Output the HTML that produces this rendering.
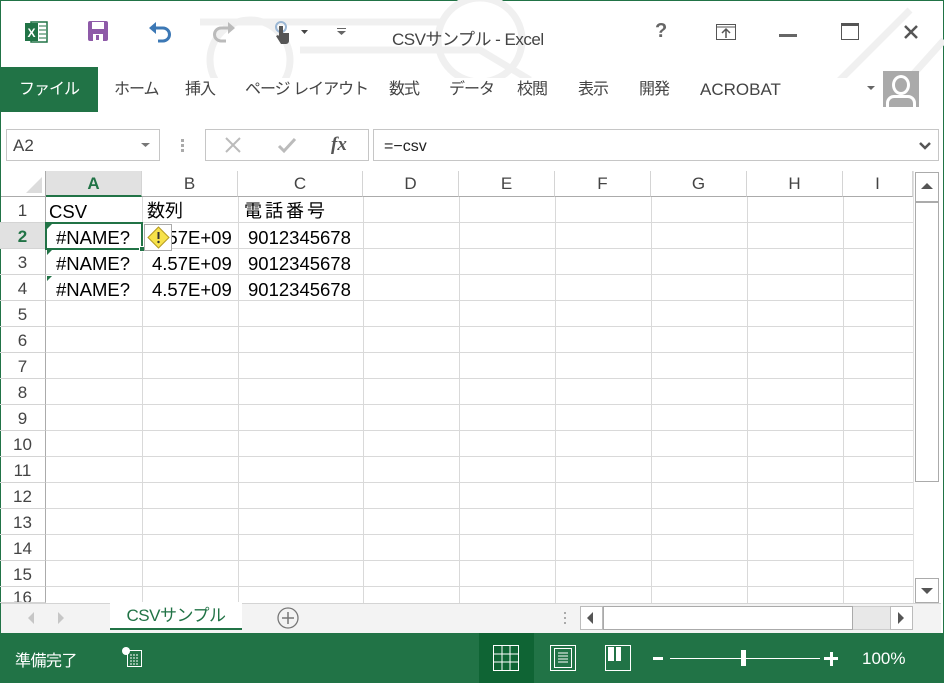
<!DOCTYPE html><html><head><meta charset="utf-8"><style>
*{margin:0;padding:0;box-sizing:border-box}
body{width:944px;height:683px;overflow:hidden;background:#fff;font-family:"Liberation Sans","Noto Sans CJK JP",sans-serif;position:relative;color:#444}
.a{position:absolute}
.tab{position:absolute;top:80px;font-size:16px;color:#444;letter-spacing:-1px;line-height:20px}
.ch{position:absolute;top:171px;height:26px;font-size:17px;color:#444;text-align:center;line-height:26px;border-right:1px solid #d4d4d4;border-bottom:1px solid #ababab;background:#fff}
.rh{position:absolute;left:0;width:46px;height:26px;font-size:17px;text-align:center;line-height:28px;color:#444;border-bottom:1px solid #d4d4d4;border-right:1px solid #ababab}
.cell{position:absolute;font-size:18.5px;color:#000;line-height:26px;height:26px}
</style></head><body>
<div class="a" style="left:0;top:0;width:944px;height:683px;border:1px solid #217346;border-bottom:none"></div>
<svg class="a" style="left:190px;top:0" width="754" height="78"><g stroke="#f0f0f0" stroke-width="7" fill="none"><circle cx="60" cy="60" r="40"/><path d="M10 22 H250 M110 50 H290 L340 80 M640 90 L720 10 M700 100 L754 40"/><circle cx="290" cy="40" r="42"/></g></svg>
<svg class="a" style="left:25px;top:20px" width="24" height="24"><rect x="6" y="2" width="16" height="20" fill="#fff" stroke="#217346" stroke-width="1.5"/><path d="M14 6h7M14 10h7M14 14h7M14 18h7" stroke="#217346"/><rect x="0" y="3" width="13" height="18" fill="#217346"/><text x="2.5" y="17" font-size="12" font-weight="bold" fill="#fff" font-family="Liberation Sans">X</text></svg>
<svg class="a" style="left:88px;top:21px" width="20" height="20"><rect x="0" y="0" width="20" height="20" rx="2" fill="#8e5aa8"/><rect x="4" y="1" width="12" height="7" fill="#fff"/><rect x="5" y="13" width="10" height="7" fill="#fff"/><rect x="8" y="14" width="3" height="5" fill="#8e5aa8"/></svg>
<svg class="a" style="left:148px;top:20px" width="26" height="24"><path d="M6 8 H15 A6 6 0 0 1 15 21 H10" stroke="#3c78b5" stroke-width="3" fill="none"/><path d="M1 8 L8 2 V14Z" fill="#3c78b5"/></svg>
<svg class="a" style="left:210px;top:20px" width="26" height="24"><path d="M20 8 H11 A6 6 0 0 0 11 21 H16" stroke="#bbb" stroke-width="3" fill="none"/><path d="M25 8 L18 2 V14Z" fill="#bbb"/></svg>
<svg class="a" style="left:272px;top:20px" width="40" height="26"><circle cx="9" cy="7" r="5" fill="none" stroke="#9bb7d4" stroke-width="2"/><path d="M7 6 h4 v7 h6 v8 a3 3 0 0 1 -3 3 h-5 l-5 -8 l2 -1 l1 1z" fill="#555"/><path d="M29 10 h7 l-3.5 4z" fill="#444"/></svg>
<div class="a" style="left:337px;top:28px;width:9px;border-top:1px solid #666"></div>
<svg class="a" style="left:337px;top:31px" width="9" height="5"><path d="M0 0h9l-4.5 4z" fill="#666"/></svg>
<div class="a" style="left:392px;top:25px;font-size:17px;color:#444;letter-spacing:-0.5px">CSVサンプル - Excel</div>
<div class="a" style="left:655px;top:20px;font-size:20px;font-weight:bold;color:#666">?</div>
<svg class="a" style="left:716px;top:24px" width="20" height="16"><rect x=".5" y=".5" width="19" height="15" fill="none" stroke="#555"/><path d="M1 3h18" stroke="#555"/><path d="M10 14V6M6 9l4-4 4 4" stroke="#555" stroke-width="1.5" fill="none"/></svg>
<div class="a" style="left:779px;top:34px;width:18px;height:3px;background:#666"></div>
<div class="a" style="left:841px;top:23px;width:18px;height:17px;border:1px solid #555;border-top:3px solid #555"></div>
<svg class="a" style="left:903px;top:24px" width="16" height="16"><path d="M2 2L14 14M14 2L2 14" stroke="#555" stroke-width="2.5"/></svg>
<div class="a" style="left:0;top:67px;width:98px;height:45px;background:#217346;color:#fff;font-size:16px;text-align:center;line-height:45px;letter-spacing:-1px">ファイル</div>
<div class="tab" style="left:114px">ホーム</div>
<div class="tab" style="left:185px">挿入</div>
<div class="tab" style="left:245px">ページ レイアウト</div>
<div class="tab" style="left:389px">数式</div>
<div class="tab" style="left:449px">データ</div>
<div class="tab" style="left:517px">校閲</div>
<div class="tab" style="left:578px">表示</div>
<div class="tab" style="left:639px">開発</div>
<div class="tab" style="left:700px;font-size:17px;letter-spacing:0">ACROBAT</div>
<svg class="a" style="left:867px;top:86px" width="8" height="5"><path d="M0 0h8l-4 4z" fill="#666"/></svg>
<div class="a" style="left:883px;top:71px;width:36px;height:36px;background:#aaa;overflow:hidden"><div class="a" style="left:9px;top:4px;width:18px;height:20px;border-radius:50%;border:3px solid #fff"></div><div class="a" style="left:3px;top:24px;width:30px;height:20px;border-radius:8px 8px 0 0;border:3px solid #fff"></div></div>
<div class="a" style="left:6px;top:129px;width:154px;height:32px;border:1px solid #c6c6c6;font-size:17px;line-height:32px;padding-left:6px;color:#444">A2</div>
<svg class="a" style="left:141px;top:143px" width="9" height="5"><path d="M0 0h9l-4.5 4z" fill="#777"/></svg>
<div class="a" style="left:181px;top:139px;width:3px;height:3px;background:#aaa;box-shadow:0 5px #aaa,0 10px #aaa"></div>
<div class="a" style="left:205px;top:129px;width:164px;height:32px;border:1px solid #c6c6c6"></div>
<svg class="a" style="left:224px;top:136px" width="18" height="18"><path d="M2 2L16 16M16 2L2 16" stroke="#bbb" stroke-width="2"/></svg>
<svg class="a" style="left:277px;top:136px" width="20" height="18"><path d="M2 10l5 5 11-12" stroke="#bbb" stroke-width="3" fill="none"/></svg>
<div class="a" style="left:331px;top:134px;font-family:'Liberation Serif',serif;font-style:italic;font-weight:bold;font-size:19px;color:#555">fx</div>
<div class="a" style="left:373px;top:129px;width:566px;height:32px;border:1px solid #c6c6c6;font-size:16px;line-height:34px;padding-left:10px;color:#222">=−csv</div>
<svg class="a" style="left:918px;top:141px" width="14" height="9"><path d="M2 2l5 5 5-5" stroke="#555" stroke-width="2.5" fill="none"/></svg>
<svg class="a" style="left:0;top:197px" width="913" height="406">
<g stroke="#d9d9d9" stroke-width="1">
<path d="M142.5 0V406M238.5 0V406M363.5 0V406M459.5 0V406M555.5 0V406M651.5 0V406M747.5 0V406M843.5 0V406"/>
<path d="M46 25.5H913M46 51.5H913M46 77.5H913M46 103.5H913M46 129.5H913M46 155.5H913M46 181.5H913M46 207.5H913M46 233.5H913M46 259.5H913M46 285.5H913M46 311.5H913M46 337.5H913M46 363.5H913M46 389.5H913"/>
</g></svg>
<div class="a" style="left:1px;top:171px;width:45px;height:26px;border-right:1px solid #ababab;border-bottom:1px solid #ababab"></div>
<svg class="a" style="left:24px;top:175px" width="20" height="20"><path d="M18 2V18H2Z" fill="#dcdcdc"/></svg>
<div class="ch" style="left:46px;width:96px;background:#e1e1e1;color:#217346;font-weight:bold;border-bottom:2px solid #217346">A</div>
<div class="ch" style="left:142px;width:96px">B</div>
<div class="ch" style="left:238px;width:125px">C</div>
<div class="ch" style="left:363px;width:96px">D</div>
<div class="ch" style="left:459px;width:96px">E</div>
<div class="ch" style="left:555px;width:96px">F</div>
<div class="ch" style="left:651px;width:96px">G</div>
<div class="ch" style="left:747px;width:96px">H</div>
<div class="ch" style="left:843px;width:70px">I</div>
<div class="rh" style="top:197px">1</div>
<div class="rh" style="top:223px;background:#e1e1e1;color:#217346;font-weight:bold">2</div>
<div class="rh" style="top:249px">3</div><div class="rh" style="top:275px">4</div><div class="rh" style="top:301px">5</div><div class="rh" style="top:327px">6</div><div class="rh" style="top:353px">7</div><div class="rh" style="top:379px">8</div><div class="rh" style="top:405px">9</div><div class="rh" style="top:431px">10</div><div class="rh" style="top:457px">11</div><div class="rh" style="top:483px">12</div><div class="rh" style="top:509px">13</div><div class="rh" style="top:535px">14</div><div class="rh" style="top:561px">15</div><div class="rh" style="top:587px;height:16px;line-height:22px;overflow:hidden">16</div>
<div class="cell" style="left:49px;top:199px">CSV</div>
<div class="cell" style="left:147px;top:198px;font-size:18px">数列</div>
<div class="cell" style="left:244px;top:198px;font-size:18px;letter-spacing:3px">電話番号</div>
<div class="cell" style="left:56px;top:225px">#NAME?</div>
<div class="cell" style="left:56px;top:251px">#NAME?</div>
<div class="cell" style="left:56px;top:277px">#NAME?</div>
<div class="cell" style="left:152px;top:225px">4.57E+09</div>
<div class="cell" style="left:152px;top:251px">4.57E+09</div>
<div class="cell" style="left:152px;top:277px">4.57E+09</div>
<div class="cell" style="left:248px;top:225px">9012345678</div>
<div class="cell" style="left:248px;top:251px">9012345678</div>
<div class="cell" style="left:248px;top:277px">9012345678</div>
<svg class="a" style="left:47px;top:224px" width="6" height="60"><path d="M0 0h5L0 5z M0 26h5L0 31z M0 52h5L0 57z" fill="#217346"/></svg>
<div class="a" style="left:45px;top:222px;width:98px;height:28px;border:2px solid #217346"></div>
<div class="a" style="left:139px;top:246px;width:6px;height:6px;background:#217346;border:1px solid #fff"></div>
<div class="a" style="left:144px;top:224px;width:28px;height:27px;background:#fff;border:1px solid #aaa"></div>
<svg class="a" style="left:147px;top:226px" width="23" height="23"><path d="M11.5 1L22 11.5 11.5 22 1 11.5Z" fill="#f7e24a" stroke="#b59a1f"/><path d="M11.5 6v7" stroke="#333" stroke-width="2"/><circle cx="11.5" cy="16" r="1.2" fill="#333"/></svg>
<div class="a" style="left:913px;top:171px;width:27px;height:432px;background:#fff;border-left:1px solid #e0e0e0"></div>
<div class="a" style="left:915px;top:172px;width:24px;height:30px;border:1px solid #ababab"></div>
<svg class="a" style="left:921px;top:183px" width="12" height="7"><path d="M0 6h12L6 0z" fill="#555"/></svg>
<div class="a" style="left:915px;top:202px;width:24px;height:280px;border:1px solid #ababab;background:#fff"></div>
<div class="a" style="left:915px;top:578px;width:24px;height:25px;border:1px solid #ababab"></div>
<svg class="a" style="left:921px;top:588px" width="12" height="7"><path d="M0 0h12L6 6z" fill="#555"/></svg>
<div class="a" style="left:1px;top:603px;width:940px;height:30px;background:#f3f3f3;border-top:1px solid #d4d4d4"></div>
<svg class="a" style="left:28px;top:612px" width="44" height="12"><path d="M6 0v12L0 6z M30 0v12l6-6z" fill="#c6c6c6"/></svg>
<div class="a" style="left:110px;top:602px;width:132px;height:28px;background:#fff;border-bottom:2px solid #217346;color:#217346;font-size:17px;text-align:center;line-height:28px;letter-spacing:-0.5px">CSVサンプル</div>
<svg class="a" style="left:277px;top:607px" width="22" height="22"><circle cx="11" cy="11" r="10" fill="none" stroke="#777" stroke-width="1.3"/><path d="M11 5v12M5 11h12" stroke="#777" stroke-width="1.5"/></svg>
<div class="a" style="left:564px;top:612px;width:2px;height:2px;background:#aaa;box-shadow:0 5px #aaa,0 10px #aaa"></div>
<div class="a" style="left:580px;top:606px;width:333px;height:24px;background:#e8e8e8;border:1px solid #ccc"></div>
<div class="a" style="left:580px;top:606px;width:23px;height:24px;background:#fff;border:1px solid #bbb"></div>
<svg class="a" style="left:587px;top:612px" width="6" height="12"><path d="M6 0v12L0 6z" fill="#555"/></svg>
<div class="a" style="left:603px;top:606px;width:250px;height:24px;background:#fff;border:1px solid #aaa"></div>
<div class="a" style="left:890px;top:606px;width:23px;height:24px;background:#fff;border:1px solid #bbb"></div>
<svg class="a" style="left:898px;top:612px" width="6" height="12"><path d="M0 0v12l6-6z" fill="#555"/></svg>
<div class="a" style="left:0;top:633px;width:944px;height:50px;background:#217346"></div>
<div class="a" style="left:15px;top:647px;color:#fff;font-size:16px;letter-spacing:-0.5px">準備完了</div>
<svg class="a" style="left:121px;top:646px" width="22" height="22"><circle cx="5" cy="5" r="4" fill="#fff"/><rect x="6.5" y="4.5" width="14" height="16" fill="none" stroke="#fff"/><path d="M9 9h2M12 9h2M15 9h2M9 12h2M12 12h2M15 12h2M9 15h2M12 15h2M15 15h2M9 18h2M12 18h2M15 18h2" stroke="#fff"/></svg>
<div class="a" style="left:479px;top:633px;width:55px;height:50px;background:#0f6434"></div>
<svg class="a" style="left:493px;top:645px" width="26" height="26"><g stroke="#fff" fill="none"><rect x=".5" y=".5" width="25" height="25"/><path d="M9 0V26M17 0V26M0 9H26M0 17H26"/></g></svg>
<svg class="a" style="left:550px;top:645px" width="26" height="26"><g stroke="#fff" fill="none"><rect x=".5" y=".5" width="25" height="25"/><rect x="4.5" y="3.5" width="17" height="19"/><path d="M8 8h10M8 11h10M8 14h10M8 17h10"/></g></svg>
<svg class="a" style="left:605px;top:645px" width="26" height="26"><g stroke="#fff" fill="none"><rect x=".5" y=".5" width="25" height="25"/></g><rect x="3" y="2" width="6" height="14" fill="#fff"/><rect x="11" y="2" width="5" height="14" fill="#fff"/></svg>
<div class="a" style="left:653px;top:657px;width:10px;height:3px;background:#fff"></div>
<div class="a" style="left:670px;top:658px;width:150px;height:1px;background:#fff"></div>
<div class="a" style="left:741px;top:650px;width:5px;height:16px;background:#fff"></div>
<div class="a" style="left:824px;top:657px;width:14px;height:3px;background:#fff"></div>
<div class="a" style="left:829.5px;top:652px;width:3px;height:14px;background:#fff"></div>
<div class="a" style="left:862px;top:649px;color:#fff;font-size:17px">100%</div>
</body></html>
